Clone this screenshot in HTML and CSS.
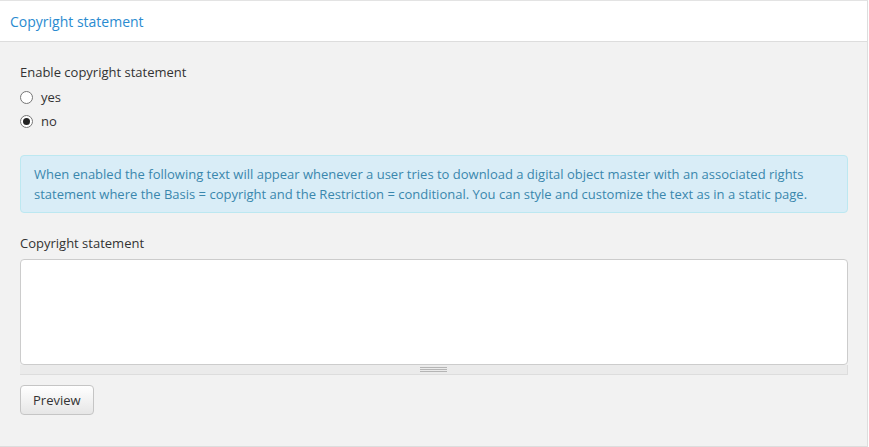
FILE: index.html
```html
<!DOCTYPE html>
<html>
<head>
<meta charset="utf-8">
<link rel="stylesheet" href="styles.css">
</head>
<body>
<div class="panel">
  <div class="panel-head">Copyright statement</div>
  <div class="panel-body">
    <div class="field-label first">Enable copyright statement</div>
    <label class="radio"><span class="radio-dot"></span>yes</label>
    <label class="radio"><span class="radio-dot checked"></span>no</label>
    <div class="alert">When enabled the following text will appear whenever a user tries to download a digital object master with an associated rights statement where the Basis = copyright and the Restriction = conditional. You can style and customize the text as in a static page.</div>
    <div class="field-label">Copyright statement</div>
    <div class="editor">
      <div class="editor-area"></div>
      <div class="editor-resize"><span class="grip"></span></div>
    </div>
    <button class="btn">Preview</button>
  </div>
</div>
</body>
</html>
```

FILE: styles.css
```css
html, body {
  margin: 0;
  padding: 0;
  background: #ffffff;
}
body {
  font-family: "Open Sans", "Liberation Sans", sans-serif;
  font-size: 13px;
  color: #333333;
}
.panel {
  width: 868px;
  height: 447px;
  border-top: 1px solid #e3e3e3;
  border-right: 1px solid #dddddd;
  border-bottom: 1px solid #dddddd;
  box-sizing: border-box;
  display: flex;
  flex-direction: column;
}
.panel-head {
  background: #ffffff;
  height: 41px;
  box-sizing: border-box;
  border-bottom: 1px solid #dddddd;
  padding: 0 10px;
  display: flex;
  align-items: center;
  font-size: 14px;
  color: #2a8bd0;
}
.panel-body {
  flex: 1;
  background: #f2f2f2;
  padding: 20px 19px 0 20px;
  display: flex;
  flex-direction: column;
  align-items: flex-start;
}
.field-label {
  line-height: 20px;
  margin-top: 20px;
  margin-bottom: 6px;
}
.field-label.first {
  margin-top: 0;
  margin-bottom: 3px;
}
.radio {
  display: flex;
  align-items: center;
  height: 24px;
  line-height: 20px;
}
.radio-dot {
  width: 11px;
  height: 11px;
  border: 1px solid #767676;
  border-radius: 50%;
  background: #ffffff;
  margin-right: 8px;
  position: relative;
}
.radio-dot.checked::after {
  content: "";
  position: absolute;
  left: 2px;
  top: 2px;
  width: 7px;
  height: 7px;
  border-radius: 50%;
  background: #222222;
}
.alert {
  align-self: stretch;
  margin-top: 22px;
  background: #d9edf7;
  border: 1px solid #bce8f1;
  border-radius: 4px;
  color: #3a87ad;
  padding: 8px 13px 8px 13px;
  line-height: 20px;
}
.editor {
  align-self: stretch;
  display: flex;
  flex-direction: column;
}
.editor-area {
  height: 104px;
  background: #ffffff;
  border: 1px solid #cccccc;
  border-radius: 4px;
}
.editor-resize {
  height: 9px;
  background: #ebebeb;
  border-bottom: 1px solid #dddddd;
  border-right: 1px solid #dddddd;
  display: flex;
  justify-content: center;
  align-items: center;
}
.grip {
  width: 27px;
  height: 5px;
  border-top: 1px solid #b5b5b5;
  border-bottom: 1px solid #b5b5b5;
  box-sizing: border-box;
  position: relative;
}
.grip::after {
  content: "";
  position: absolute;
  left: 0;
  right: 0;
  top: 1px;
  border-top: 1px solid #b5b5b5;
}
.btn {
  margin-top: 10px;
  font-family: "Open Sans", "Liberation Sans", sans-serif;
  font-size: 13px;
  color: #333333;
  height: 30px;
  padding: 0 12px;
  border: 1px solid #c5c5c5;
  border-radius: 4px;
  background: linear-gradient(#ffffff, #e6e6e6);
}
```
